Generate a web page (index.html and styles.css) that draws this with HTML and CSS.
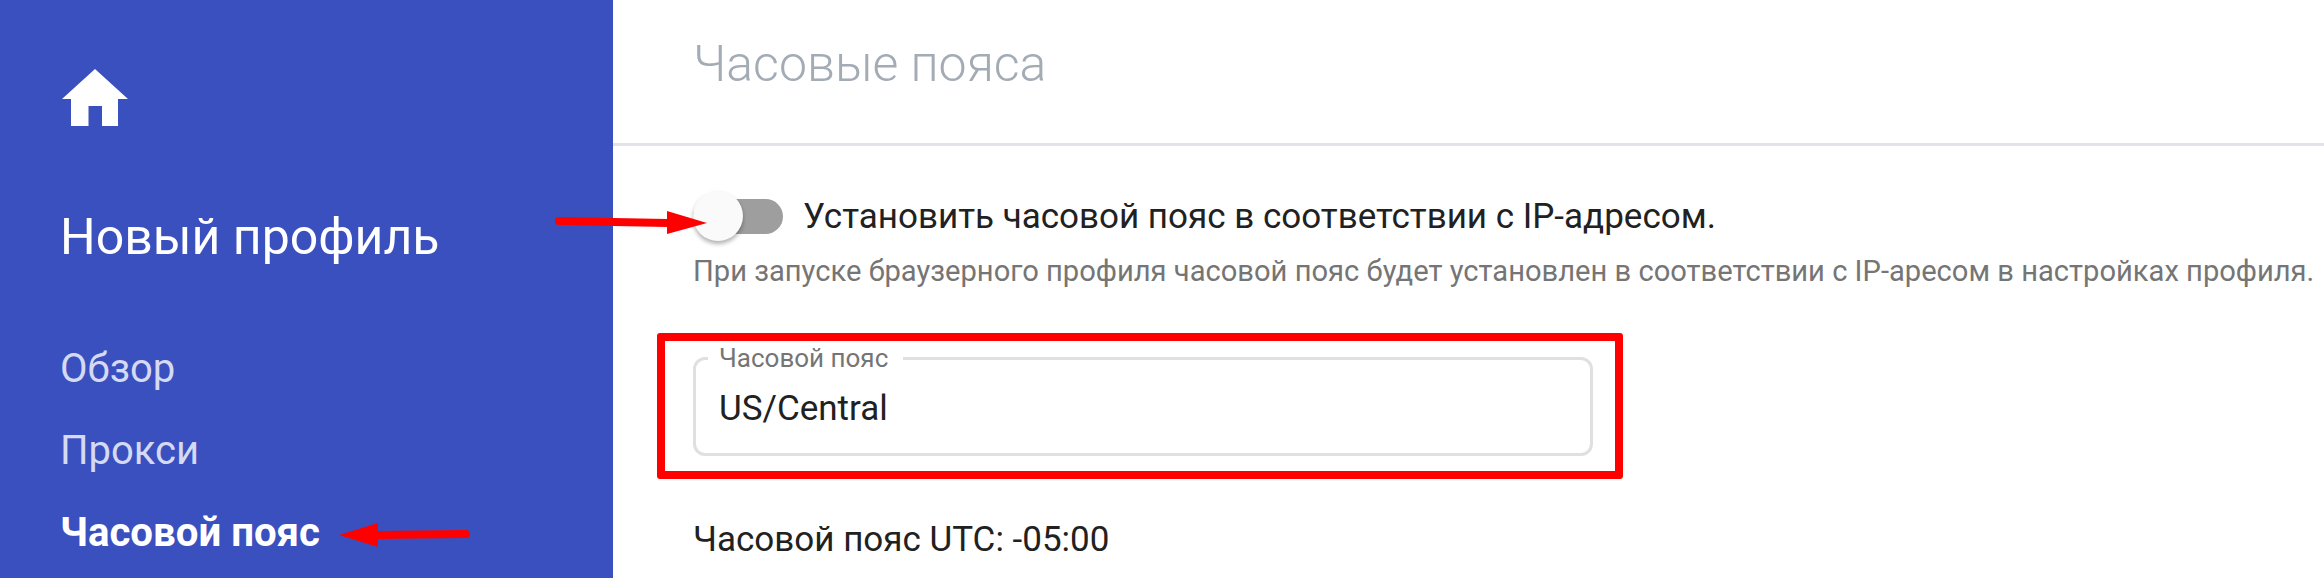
FILE: index.html
```html
<!DOCTYPE html>
<html lang="ru">
<head>
    <title>Часовые пояса</title>
    <link rel="stylesheet" href="styles.css">
</head>
<body>
    <div class="app">
        <aside class="sidebar">
            <svg class="home_icon" viewBox="0 0 66 57" aria-hidden="true">
                <path d="M33 0 L66 30 H56 V57 H40 V37 H26.5 V57 H9 V30 H0 Z" fill="#fff"/>
            </svg>
            <h2 class="profile_name">Новый профиль</h2>
            <nav class="nav_list">
                <a class="nav_item">Обзор</a>
                <a class="nav_item">Прокси</a>
                <a class="nav_item active">Часовой пояс</a>
            </nav>
        </aside>
        <main class="content">
            <header class="page_header">
                <h1 class="page_title">Часовые пояса</h1>
            </header>
            <section class="page_body">
                <div class="switch_row">
                    <span class="switch">
                        <span class="switch_thumb"></span>
                    </span>
                    <label class="switch_label">Установить часовой пояс в соответствии с IP-адресом.</label>
                </div>
                <p class="hint">При запуске браузерного профиля часовой пояс будет установлен в соответствии с IP-аресом в настройках профиля.</p>
                <fieldset class="field">
                    <legend class="field_label">Часовой пояс</legend>
                    <div class="field_value">US/Central</div>
                </fieldset>
                <p class="utc">Часовой пояс UTC: -05:00</p>
            </section>
        </main>
    </div>

    <!-- red marks drawn over the screenshot -->
    <div class="mark_box"></div>
    <svg class="mark_arrows" viewBox="0 0 2324 578" aria-hidden="true">
        <path d="M559 221 L668 223" stroke="#f00" stroke-width="8" stroke-linecap="round" fill="none"/>
        <path d="M667 211 L707 223 L667 234 Z" fill="#f00"/>
        <path d="M377 535 L466 534" stroke="#f00" stroke-width="8" stroke-linecap="round" fill="none"/>
        <path d="M378 523 L339 535 L378 547 Z" fill="#f00"/>
    </svg>
</body>
</html>
```

FILE: styles.css
```css
html, body{
    margin: 0;
    height: 100%;
    overflow: hidden;
    background: #fff;
}
body{
    font-family: Roboto, "Liberation Sans", sans-serif;
    color: #212121;
}
.app{
    display: flex;
    height: 578px;
    overflow: hidden;
}
.sidebar{
    flex: 0 0 613px;
    box-sizing: border-box;
    padding: 69px 0 0 60px;
    background-color: #3b50bf;
    color: #fff;
}
.home_icon{
    display: block;
    width: 66px;
    height: 57px;
    margin-left: 2px;
}
.profile_name{
    margin: 81px 0 0;
    font-size: 50px;
    line-height: 60px;
    font-weight: 400;
}
.nav_list{
    display: flex;
    flex-direction: column;
    margin-top: 61px;
}
.nav_item{
    height: 82px;
    font-size: 40px;
    line-height: 82px;
    color: #d5daf3;
}
.nav_item.active{
    font-size: 40.2px;
    font-weight: 700;
    color: #fff;
}
.content{
    flex: 1;
    min-width: 0;
}
.page_header{
    box-sizing: border-box;
    height: 146px;
    padding: 34px 0 0 80px;
    border-bottom: 3px solid #e2e3e8;
}
.page_title{
    margin: 0;
    font-size: 50px;
    line-height: 60px;
    font-weight: 300;
    color: #a3abb5;
}
.page_body{
    padding: 45px 0 0 80px;
}
.switch_row{
    display: flex;
    align-items: center;
    height: 50px;
}
.switch{
    position: relative;
    flex: 0 0 90px;
    height: 35px;
    border-radius: 18px;
    background-color: #9e9e9e;
}
.switch_thumb{
    position: absolute;
    left: 0;
    top: -8px;
    width: 50px;
    height: 50px;
    border-radius: 50%;
    background-color: #fafafa;
    box-shadow: 0 3px 4px rgba(0, 0, 0, .3);
}
.switch_label{
    margin-left: 20px;
    padding-top: 2px;
    font-size: 35px;
    line-height: 52px;
}
.hint{
    margin: 12px 0 0;
    font-size: 29.13px;
    line-height: 36px;
    white-space: nowrap;
    color: #757575;
}
.field{
    box-sizing: border-box;
    width: 900px;
    height: 111px;
    margin: 56px 0 0;
    padding: 0 23px;
    border: 3px solid #e0e0e0;
    border-radius: 12px;
}
.field_label{
    padding: 0 15px 0 11px;
    margin-left: -11px;
    font-size: 26px;
    line-height: 26px;
    color: #757575;
}
.field_value{
    font-size: 35px;
    line-height: 44px;
    margin-top: 16px;
}
.utc{
    margin: 62px 0 0;
    font-size: 35px;
    line-height: 44px;
}
.mark_box{
    position: absolute;
    left: 657px;
    top: 333px;
    box-sizing: border-box;
    width: 966px;
    height: 146px;
    border: 8px solid #f00;
    border-radius: 3px;
}
.mark_arrows{
    position: absolute;
    left: 0;
    top: 0;
    width: 2324px;
    height: 578px;
}
```
